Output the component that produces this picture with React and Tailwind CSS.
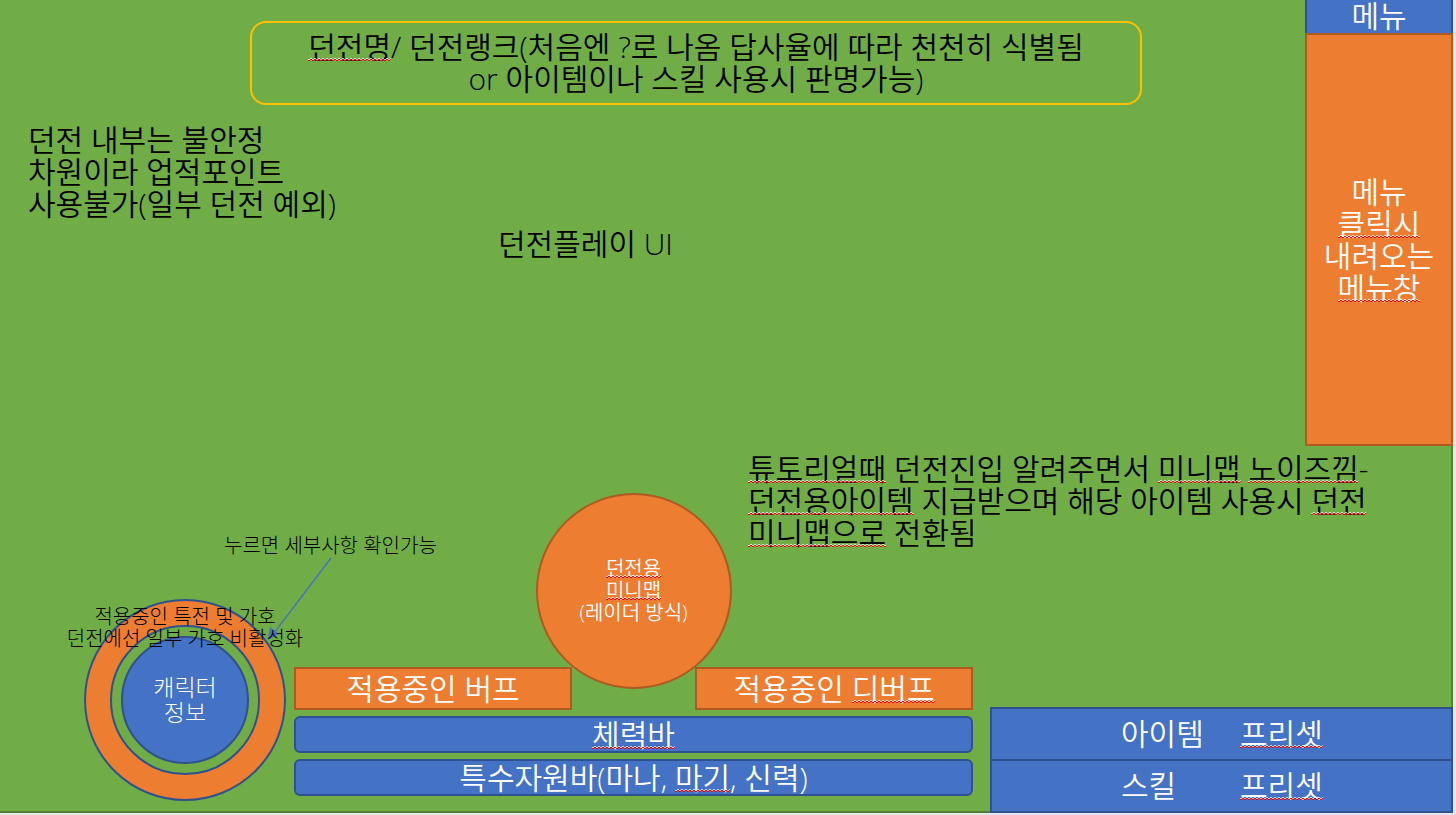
function Flagged({ children }) {
  return (
    <span className="relative inline-block">
      {children}
      <svg className="absolute bottom-[1px] left-0 h-[4px] w-full" aria-hidden="true">
        <defs>
          <pattern id="squiggle" width="4" height="4" patternUnits="userSpaceOnUse">
            <path d="M-1 0 L1 2 L3 0 L5 2" fill="none" stroke="#ffffff" strokeOpacity="0.7" strokeWidth="1" />
            <path d="M-1 1 L1 3 L3 1 L5 3" fill="none" stroke="#ff0000" strokeWidth="1" />
          </pattern>
        </defs>
        <rect width="100%" height="4" fill="url(#squiggle)" />
      </svg>
    </span>
  );
}

function MenuColumn() {
  return (
    <nav className="-mr-[2px] flex w-[148px] shrink-0 flex-col text-center text-white">
      <button type="button" className="flex h-[33px] items-start justify-center border-x-2 border-[#2f528f] bg-[#4472c4]">
        메뉴
      </button>
      <div className="flex h-[413px] flex-col justify-center border-2 border-[#ae5a21] bg-[#ed7d31]">
        <p>메뉴</p>
        <p><Flagged>클릭시</Flagged></p>
        <p>내려오는</p>
        <p><Flagged>메뉴창</Flagged></p>
      </div>
    </nav>
  );
}

function Character() {
  return (
    <div className="relative col-start-1 row-span-2 row-start-1 flex flex-col justify-end pb-[12px] pl-[84px] font-light">
      <p className="mb-[42px] ml-[140px] text-[20px] leading-[22px] whitespace-nowrap">
        누르면 세부사항 확인가능
      </p>
      <div className="relative grid size-[202px] place-items-center rounded-full border-2 border-[#2f528f] bg-[#ed7d31]">
        <div className="grid size-[150px] place-items-center rounded-full border-2 border-[#2f528f] bg-[#70ad47]">
          <button type="button" className="size-[128px] rounded-full border-2 border-[#2f528f] bg-[#4472c4] text-[23px] leading-[25px] text-white">
            캐릭터
            <br />
            정보
          </button>
        </div>
        <svg className="absolute -top-[44px] left-[182px] h-[86px] w-[66px]" viewBox="0 0 66 86" aria-hidden="true">
          <path d="M63 1 L6 76" stroke="#4472c4" strokeWidth="1.3" fill="none" />
          <path d="M0 83 L2 70 L11 77 Z" fill="#4472c4" />
        </svg>
        <p className="absolute top-[5px] left-1/2 -translate-x-1/2 text-center text-[20px] leading-[22px] whitespace-nowrap">
          적용중인 특전 및 가호
          <br />
          던전에선 일부 가호 비활성화
        </p>
      </div>
    </div>
  );
}

function Effect({ children, className }) {
  return (
    <div className={`flex h-[43px] items-center justify-center border-2 border-[#ae5a21] bg-[#ed7d31] ${className}`}>
      <p>{children}</p>
    </div>
  );
}

function Bar({ children }) {
  return (
    <div className="col-span-3 flex h-[37px] items-center justify-center rounded-md border-2 border-[#2f528f] bg-[#4472c4]">
      <p>{children}</p>
    </div>
  );
}

function Preset({ name, className = "" }) {
  return (
    <button type="button" className={`flex h-[54px] items-center border-2 border-[#2f528f] bg-[#4472c4] pl-[129px] text-left ${className}`}>
      <span className="w-[119px]">{name}</span>
      <Flagged>프리셋</Flagged>
    </button>
  );
}

export default function App() {
  return (
    <div className="min-h-screen bg-[#e7e6e6] pr-[3px] pb-[2px] font-['Open_Sans','Noto_Sans_CJK_KR',sans-serif] text-[30px] leading-[32px] font-[350] text-black">
      <main className="flex min-h-[calc(100vh-2px)] flex-col justify-between border-r-2 border-b-2 border-[#507e32] bg-[#70ad47]">
        <section className="flex items-start">
          <div className="flex-1 pt-[21px]">
            <header className="mr-[163px] ml-[250px] flex h-[84px] items-center justify-center rounded-2xl border-2 border-[#ffc000] text-center">
              <p>
                <Flagged>던전명</Flagged>/ 던전랭크(처음엔 ?로 나옴 답사율에 따라 천천히 식별됨
                <br />
                or 아이템이나 스킬 사용시 판명가능)
              </p>
            </header>
            <div className="mt-[19px] flex items-start pl-[28px]">
              <p className="w-[470px]">
                던전 내부는 불안정
                <br />
                차원이라 업적포인트
                <br />
                사용불가(일부 던전 예외)
              </p>
              <h1 className="pt-[104px]">던전플레이 UI</h1>
            </div>
          </div>
          <MenuColumn />
        </section>

        <section className="-mr-[2px] -mb-[2px] grid grid-cols-[294px_minmax(0,278fr)_minmax(0,123fr)_minmax(0,278fr)_17px_minmax(0,463fr)] grid-rows-[214px_146px]">
          <Character />

          <p className="col-span-3 col-start-4 row-start-1 ml-[53px]">
            <Flagged>튜토리얼때</Flagged> 던전진입 알려주면서 <Flagged>미니맵</Flagged> <Flagged>노이즈낌</Flagged>-
            <br />
            <Flagged>던전용아이템</Flagged> 지급받으며 해당 아이템 사용시 <Flagged>던전</Flagged>
            <br />
            <Flagged>미니맵으로</Flagged> 전환됨
          </p>

          <div className="z-10 col-start-3 row-start-1 -mb-[22px] flex size-[196px] flex-col justify-center self-end justify-self-center rounded-full border-2 border-[#ae5a21] bg-[#ed7d31] text-center text-[20px] leading-[22px] text-white">
            <p><Flagged>던전용</Flagged></p>
            <p><Flagged>미니맵</Flagged></p>
            <p>(레이더 방식)</p>
          </div>

          <div className="col-span-3 col-start-2 row-start-2 grid grid-cols-[278fr_123fr_278fr] content-start gap-y-[6px] text-white">
            <Effect className="col-start-1">적용중인 버프</Effect>
            <Effect className="col-start-3">
              적용중인 <Flagged>디버프</Flagged>
            </Effect>
            <Bar><Flagged>체력바</Flagged></Bar>
            <Bar>
              특수자원바(마나, <Flagged>마기</Flagged>, 신력)
            </Bar>
          </div>

          <div className="col-start-6 row-start-2 flex flex-col self-end text-white">
            <Preset name="아이템" />
            <Preset name="스킬" className="-mt-[2px]" />
          </div>
        </section>
      </main>
    </div>
  );
}
